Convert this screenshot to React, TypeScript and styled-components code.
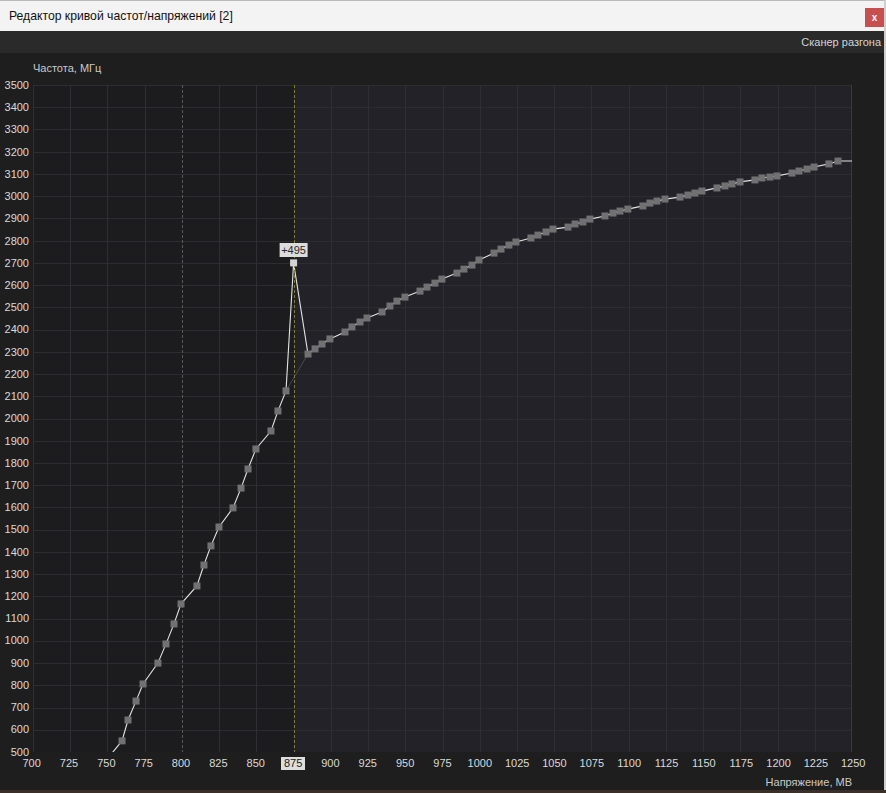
import styled, { createGlobalStyle } from "styled-components";

const GlobalStyle = createGlobalStyle`
  html, body {
    margin: 0;
    padding: 0;
    background: #3a3027;
  }
  body {
    font-family: "Liberation Sans", Arial, sans-serif;
  }
`;

const V_MIN = 700;
const V_MAX = 1250;
const F_MIN = 500;
const F_MAX = 3500;
const PLOT_W = 819;
const PLOT_H = 667;
const LOCK_V = 875;
const LOCK_F = 2700;

const xOf = (v: number) => ((v - V_MIN) / (V_MAX - V_MIN)) * PLOT_W;
const yOf = (f: number) => PLOT_H - ((f - F_MIN) / (F_MAX - F_MIN)) * PLOT_H;
const crisp = (n: number) => Math.round(n) + 0.5;

// [mV, MHz]
const lowCurve: [number, number][] = [
  [752, 486], [759.8, 550], [763.8, 644], [769.2, 729], [773.9, 806],
  [783.9, 900], [789.3, 986], [794.7, 1076], [799.4, 1166], [810.1, 1247],
  [814.8, 1341], [819.5, 1427], [824.9, 1512], [834.3, 1598], [839.7, 1687],
  [844.4, 1773], [849.7, 1863], [859.8, 1944], [864.5, 2034], [869.9, 2124],
];

const highCurve: [number, number][] = [
  [884.7, 2290], [889.4, 2313], [894.1, 2335], [899.4, 2358], [909.5, 2389],
  [914.2, 2412], [919.6, 2434], [924.3, 2452], [934.4, 2479], [939.7, 2506],
  [944.4, 2528], [949.8, 2546], [959.9, 2573], [964.6, 2591], [969.9, 2609],
  [974.6, 2627], [984.7, 2654], [989.4, 2672], [994.8, 2690], [999.5, 2713],
  [1009.6, 2744], [1014.3, 2762], [1019.6, 2780], [1024.3, 2794], [1034.4, 2812],
  [1039.1, 2825], [1044.5, 2839], [1049.2, 2852], [1059.3, 2861], [1064.0, 2875],
  [1069.3, 2884], [1074.0, 2897], [1084.1, 2911], [1089.5, 2924], [1094.2, 2933],
  [1099.5, 2942], [1109.6, 2956], [1114.3, 2969], [1119.0, 2978], [1124.4, 2987],
  [1134.5, 2996], [1139.8, 3005], [1144.5, 3014], [1149.2, 3023], [1159.3, 3037],
  [1164.7, 3046], [1169.4, 3055], [1174.8, 3064], [1184.8, 3073], [1189.5, 3082],
  [1194.9, 3086], [1199.6, 3091], [1209.7, 3104], [1214.4, 3113], [1219.8, 3122],
  [1224.5, 3131], [1234.5, 3145], [1240.6, 3158],
];

const curve: [number, number][] = [...lowCurve, [LOCK_V, LOCK_F], ...highCurve, [V_MAX, 3158]];

const voltTicks = Array.from({ length: 23 }, (_, i) => V_MIN + i * 25);
const freqTicks = Array.from({ length: 31 }, (_, i) => F_MAX - i * 100);

const Window = styled.div`
  width: 884px;
  height: 790px;
  display: flex;
  flex-direction: column;
  border-right: 2px solid #cfcfcf;
`;

const TitleBar = styled.div`
  height: 30px;
  flex: none;
  display: flex;
  justify-content: space-between;
  align-items: flex-start;
  background: #f3f3f3;
  border-top: 1px solid #b9b9b9;
  padding-left: 9px;
`;

const Title = styled.span`
  margin-top: 8px;
  font-size: 12.2px;
  color: #111;
`;

const CloseButton = styled.div`
  width: 19px;
  height: 19px;
  margin-top: 7px;
  display: flex;
  align-items: center;
  justify-content: center;
  background: #c84f4f;
  color: #fff;
  font-size: 10px;
  font-weight: bold;
`;

const Toolbar = styled.div`
  height: 22px;
  flex: none;
  display: flex;
  justify-content: flex-end;
  align-items: center;
  background: #2a2a2a;
  padding-right: 3px;
`;

const ToolButton = styled.span`
  font-size: 11px;
  color: #d4d4d4;
`;

const ChartPanel = styled.div`
  flex: 1;
  display: grid;
  grid-template-columns: 33px ${PLOT_W}px 1fr;
  grid-template-rows: 32px ${PLOT_H}px 22px 1fr;
  background: #1e1e1e;
`;

const AxisTitle = styled.div<{ $align: "left" | "right" }>`
  font-size: 11px;
  line-height: 14px;
  color: #cacaca;
  text-align: ${(p) => p.$align};
  padding-top: ${(p) => (p.$align === "left" ? "8px" : "1px")};
`;

const YAxisTitle = styled(AxisTitle)`
  grid-column: 2;
  grid-row: 1;
`;

const XAxisTitle = styled(AxisTitle)`
  grid-column: 2;
  grid-row: 4;
`;

const YLabels = styled.div`
  grid-column: 1;
  grid-row: 2;
  margin: -7px 0;
  display: flex;
  flex-direction: column;
  justify-content: space-between;
  padding-right: 4px;
`;

const YLabel = styled.span`
  font-size: 11px;
  line-height: 14px;
  color: #dadada;
  text-align: right;
`;

const XLabels = styled.div`
  grid-column: 2;
  grid-row: 3;
  margin: 0 -20px;
  display: flex;
  justify-content: space-between;
  align-items: center;
`;

const XCell = styled.div`
  width: 40px;
  display: flex;
  justify-content: center;
`;

const XLabel = styled.span<{ $active?: boolean }>`
  font-size: 11px;
  line-height: 13px;
  padding: 0 3px;
  color: ${(p) => (p.$active ? "#1a1a1a" : "#dadada")};
  background: ${(p) => (p.$active ? "#dedede" : "transparent")};
`;

const PlotArea = styled.div`
  grid-column: 2;
  grid-row: 2;
  position: relative;
`;

const PlotSvg = styled.svg`
  display: block;
`;

const OffsetTag = styled.div`
  position: absolute;
  transform: translate(-50%, -100%);
  font-size: 11px;
  line-height: 14px;
  padding: 0 2px;
  background: #dcdcdc;
  color: #2a2a2a;
`;

function CurvePlot() {
  const lockX = xOf(LOCK_V);
  const path = curve.map(([v, f]) => `${xOf(v).toFixed(1)},${yOf(f).toFixed(1)}`).join(" ");
  const dim = [lowCurve[lowCurve.length - 1], highCurve[0]]
    .map(([v, f]) => `${xOf(v).toFixed(1)},${yOf(f).toFixed(1)}`)
    .join(" ");

  return (
    <PlotSvg width={PLOT_W} height={PLOT_H}>
      <defs>
        <clipPath id="plot-clip">
          <rect x={0} y={0} width={PLOT_W} height={PLOT_H} />
        </clipPath>
      </defs>
      <rect x={0} y={0} width={lockX} height={PLOT_H} fill="#1c1c1f" />
      <rect x={lockX} y={0} width={PLOT_W - lockX} height={PLOT_H} fill="#222228" />

      {freqTicks.map((f) => (
        <line key={f} x1={0} x2={PLOT_W} y1={crisp(yOf(f))} y2={crisp(yOf(f))} stroke="#2d2d31" />
      ))}
      {voltTicks.map((v) =>
        v === 800 || v === LOCK_V ? null : (
          <line key={v} x1={crisp(xOf(v))} x2={crisp(xOf(v))} y1={0} y2={PLOT_H} stroke="#2f2f33" />
        )
      )}
      <line x1={crisp(xOf(800))} x2={crisp(xOf(800))} y1={0} y2={PLOT_H} stroke="#58585b" strokeDasharray="3 2" />
      <line x1={crisp(PLOT_W - 1)} x2={crisp(PLOT_W - 1)} y1={0} y2={PLOT_H} stroke="#3a3a3d" />

      <g clipPath="url(#plot-clip)">
        <polyline points={dim} fill="none" stroke="#4a4a4e" strokeWidth={1} />
        <polyline points={path} fill="none" stroke="#e4e4e4" strokeWidth={1.1} />
        {[...lowCurve, ...highCurve]
          .filter(([, f]) => f >= F_MIN)
          .map(([v, f]) => (
            <rect key={v} x={xOf(v) - 3.5} y={yOf(f) - 3.5} width={7} height={7} fill="#717173" />
          ))}
      </g>
      <line x1={crisp(lockX)} x2={crisp(lockX)} y1={0} y2={PLOT_H} stroke="#7e7e2e" strokeDasharray="3 2" />
      <rect x={lockX - 3.5} y={yOf(LOCK_F) - 3.5} width={7} height={7} fill="#d4d4d4" />
    </PlotSvg>
  );
}

export default function App() {
  return (
    <>
      <GlobalStyle />
      <Window>
        <TitleBar>
          <Title>Редактор кривой частот/напряжений [2]</Title>
          <CloseButton>x</CloseButton>
        </TitleBar>
        <Toolbar>
          <ToolButton>Сканер разгона</ToolButton>
        </Toolbar>
        <ChartPanel>
          <YAxisTitle $align="left">Частота, МГц</YAxisTitle>
          <YLabels>
            {freqTicks.map((f) => (
              <YLabel key={f}>{f}</YLabel>
            ))}
          </YLabels>
          <PlotArea>
            <CurvePlot />
            <OffsetTag style={{ left: xOf(LOCK_V), top: yOf(LOCK_F) - 6 }}>+495</OffsetTag>
          </PlotArea>
          <XLabels>
            {voltTicks.map((v) => (
              <XCell key={v}>
                <XLabel $active={v === LOCK_V}>{v}</XLabel>
              </XCell>
            ))}
          </XLabels>
          <XAxisTitle $align="right">Напряжение, МВ</XAxisTitle>
        </ChartPanel>
      </Window>
    </>
  );
}
